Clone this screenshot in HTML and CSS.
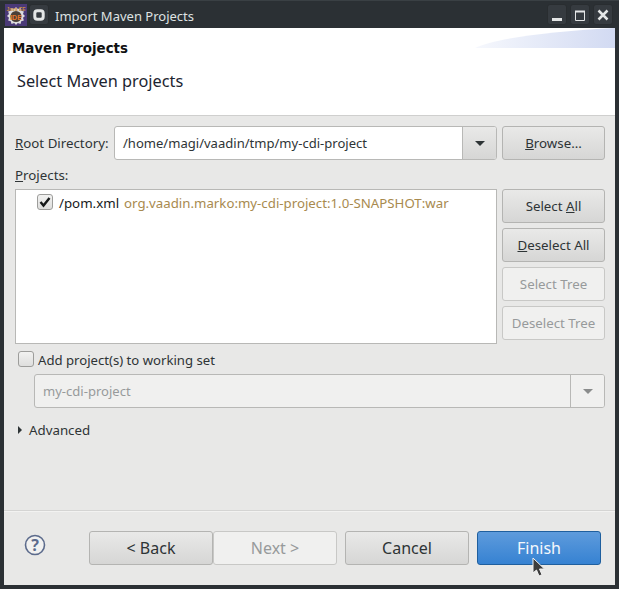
FILE: index.html

```html
<!DOCTYPE html>
<html lang="en">
<head>
  <meta charset="UTF-8" />
  <title>Import Maven Projects</title>
  <link rel="stylesheet" href="styles.css">
</head>
<body>
  <div class="window">
    <div class="titlebar">
      <svg class="app-icon" width="22" height="22" viewBox="0 0 22 22">
        <rect width="22" height="22" fill="#4b3a78"/>
        <path d="M11 3l1.800 2 2.700-1 .7 2.700 2.700.7-.9 2.700L20 12l-2 1.800.9 2.700-2.700.7-.7 2.700-2.700-.9L11 21l-1.800-2-2.700.9-.7-2.700-2.700-.7.9-2.700L2 12l2-1.900-.9-2.700 2.700-.7.7-2.700 2.700 1z" fill="#dcdcdc"/>
        <circle cx="11" cy="12.500" r="5.500" fill="#4a4038"/>
        <text x="11" y="6.500" text-anchor="middle" class="icon-top">Java EE</text>
        <text x="11" y="15.500" text-anchor="middle" class="icon-mid">IDE</text>
      </svg>
      <button class="win-btn menu-btn">
        <svg width="14" height="14" viewBox="0 0 14 14"><rect x="2.800" y="2.800" width="8.400" height="8.400" rx="2.500" fill="none" stroke="#e4e6e6" stroke-width="3"/></svg>
      </button>
      <span class="title">Import Maven Projects</span>
      <div class="win-controls">
        <button class="win-btn"><svg width="14" height="14" viewBox="0 0 14 14"><rect x="2" y="10" width="10" height="3" fill="#e4e6e6"/></svg></button>
        <button class="win-btn"><svg width="14" height="14" viewBox="0 0 14 14"><path d="M2.500 3.500h9v9h-9z" fill="none" stroke="#e4e6e6"/><rect x="2" y="2.500" width="10" height="2" fill="#e4e6e6"/></svg></button>
        <button class="win-btn"><svg width="14" height="14" viewBox="0 0 14 14"><path d="M2.500 2.500l9 9M11.500 2.500l-9 9" stroke="#e4e6e6" stroke-width="2.500" fill="none"/></svg></button>
      </div>
    </div>

    <div class="header">
      <svg class="swoosh" width="140" height="20" viewBox="0 0 140 20">
        <defs>
          <linearGradient id="sw" x1="0" x2="1" y1="0" y2="0">
            <stop offset="0" stop-color="#f6f8fd"/>
            <stop offset="1" stop-color="#d2daf2"/>
          </linearGradient>
        </defs>
        <path d="M0 20C20 10 80 3 140 0V20z" fill="url(#sw)"/>
      </svg>
      <div class="header-title">Maven Projects</div>
      <div class="header-sub">Select Maven projects</div>
    </div>

    <div class="content">
      <div class="root-row">
        <label class="root-label"><u>R</u>oot Directory:</label>
        <div class="combo">
          <div class="combo-value">/home/magi/vaadin/tmp/my-cdi-project</div>
          <div class="combo-arrow"><span class="caret"></span></div>
        </div>
        <button class="btn side-btn"><u>B</u>rowse...</button>
      </div>

      <div class="projects-label"><u>P</u>rojects:</div>
      <div class="projects-row">
        <div class="project-list">
          <div class="project-item">
            <span class="check checked">
              <svg width="14" height="14" viewBox="0 0 14 14"><path d="M2.500 7l3 3.500L11.500 3" fill="none" stroke="#16191a" stroke-width="2.400"/></svg>
            </span>
            <span class="pom">/pom.xml</span>
            <span class="artifact">org.vaadin.marko:my-cdi-project:1.0-SNAPSHOT:war</span>
          </div>
        </div>
        <div class="side-buttons">
          <button class="btn side-btn">Select <u>A</u>ll</button>
          <button class="btn side-btn"><u>D</u>eselect All</button>
          <button class="btn side-btn" disabled>Select Tree</button>
          <button class="btn side-btn" disabled>Deselect Tree</button>
        </div>
      </div>

      <div class="workset-row">
        <span class="check"></span>
        <span class="workset-label">Add project(s) to working set</span>
      </div>
      <div class="combo combo-disabled">
        <div class="combo-value">my-cdi-project</div>
        <div class="combo-arrow"><span class="caret"></span></div>
      </div>

      <div class="advanced">
        <span class="tri"></span>
        <span>Advanced</span>
      </div>
    </div>

    <div class="footer">
      <svg class="help" width="22" height="22" viewBox="0 0 22 22">
        <circle cx="11" cy="11" r="9.500" fill="#fff" fill-opacity="0.4" stroke="#5c6b8c" stroke-width="1.600"/>
        <text x="11" y="16.500" text-anchor="middle" class="help-mark">?</text>
      </svg>
      <div class="nav-buttons">
        <button class="btn foot-btn">&lt; Back</button>
        <button class="btn foot-btn" disabled>Next &gt;</button>
        <button class="btn foot-btn cancel">Cancel</button>
        <button class="btn foot-btn primary">Finish</button>
      </div>
    </div>

    <svg class="cursor" width="14" height="22" viewBox="0 0 14 22">
      <path d="M1 1v15l3.500-3 2.500 6 3-1.300-2.500-5.700H12.500z" fill="#3c3c3c" stroke="#f2f2f2" stroke-width="1"/>
    </svg>
  </div>
</body>
</html>
```

FILE: styles.css

```css
* {
  box-sizing: border-box;
}
html, body {
  margin: 0;
  padding: 0;
}
body {
  width: 619px;
  height: 589px;
  overflow: hidden;
  font-family: "Noto Sans", sans-serif;
  font-size: 13.300px;
  color: #2e3436;
}
.window {
  position: relative;
  width: 619px;
  height: 589px;
  padding: 0 4px 4px;
  background-color: #2b3034;
  display: flex;
  flex-direction: column;
  border-top: 1px solid #3a4044;
}
.titlebar {
  height: 27px;
  flex: none;
  margin: 0 -4px;
  padding: 0 6px 0 5px;
  display: flex;
  align-items: center;
  color: #dfe2e2;
  font-size: 13px;
}
.app-icon {
  margin-right: 2px;
}
.icon-top {
  font-family: "Liberation Sans", sans-serif;
  font-size: 5px;
  font-weight: bold;
  fill: #c9903e;
}
.icon-mid {
  font-family: "Liberation Sans", sans-serif;
  font-size: 7px;
  font-weight: bold;
  fill: #e8772a;
}
.title {
  margin: 2px 0 0 6px;
  flex: 1;
}
.win-controls {
  display: flex;
  gap: 3px;
}
.win-btn {
  width: 20px;
  height: 21px;
  padding: 0;
  border: 1px solid #292d30;
  border-radius: 3px;
  background-color: #363b40;
  display: flex;
  align-items: center;
  justify-content: center;
}
.header {
  position: relative;
  height: 88px;
  flex: none;
  background-color: #fff;
  border-bottom: 1px solid #cfcfce;
}
.swoosh {
  position: absolute;
  top: 0;
  right: 0;
}
.header-title {
  padding: 12px 0 0 8px;
  font-family: "DejaVu Sans", sans-serif;
  font-size: 13.400px;
  font-weight: bold;
  color: #111;
  line-height: 18px;
}
.header-sub {
  padding: 13px 0 0 13px;
  font-size: 16.300px;
  line-height: 20px;
  color: #1c2430;
}
.content {
  flex: 1;
  background-color: #e8e8e7;
  padding: 10px 10px 0 11px;
  border-bottom: 1px solid #d4d4d3;
}
.root-row {
  display: flex;
  align-items: center;
  height: 34px;
}
.root-label {
  width: 99px;
}
.combo {
  display: flex;
  width: 383px;
  height: 34px;
  background-color: #fff;
  border: 1px solid #b8b8b6;
  border-radius: 3px;
}
.combo-value {
  flex: 1;
  padding: 0 8px;
  font-size: 13.050px;
  line-height: 32px;
}
.combo-arrow {
  width: 34px;
  display: flex;
  align-items: center;
  justify-content: center;
  border-left: 1px solid #b8b8b6;
  background: linear-gradient(#e9e9e8, #d6d6d5);
  border-radius: 0 2px 2px 0;
}
.caret {
  width: 0;
  height: 0;
  border-left: 5px solid transparent;
  border-right: 5px solid transparent;
  border-top: 5px solid #2e3436;
}
.btn {
  font-family: inherit;
  font-size: 13.300px;
  color: #2e3436;
  padding: 0;
  border: 1px solid #b4b4b2;
  border-radius: 3px;
  background: linear-gradient(#e9e9e8, #d6d6d5);
}
.btn:disabled {
  color: #979a9b;
  background: #f0f0ef;
  border-color: #c8c8c6;
}
.side-btn {
  width: 103px;
  height: 34px;
}
.root-row .side-btn {
  margin-left: 5px;
}
.projects-label {
  margin-top: 6px;
  height: 23px;
  line-height: 18px;
}
.projects-row {
  display: flex;
  gap: 5px;
}
.project-list {
  width: 482px;
  height: 155px;
  background-color: #fff;
  border: 1px solid #b8b8b6;
  padding: 3px 0 0 21px;
}
.project-item {
  display: flex;
  align-items: center;
  height: 20px;
}
.project-item .check {
  margin-bottom: 2px;
}
.check {
  width: 16px;
  height: 16px;
  flex: none;
  border: 1px solid #9d9d9b;
  border-radius: 3px;
  background: linear-gradient(#f2f2f1, #dededd);
  display: flex;
  align-items: center;
  justify-content: center;
}
.pom {
  margin-left: 6px;
  color: #16191a;
}
.artifact {
  margin-left: 5px;
  font-size: 13.250px;
  color: #a88a4e;
}
.side-buttons {
  display: flex;
  flex-direction: column;
  gap: 5px;
}
.workset-row {
  display: flex;
  align-items: center;
  gap: 4px;
  height: 18px;
  margin: 6px 0 0 3px;
}
.workset-label {
  margin-top: 2px;
  font-size: 13.150px;
}
.combo-disabled {
  width: 571px;
  margin: 6px 0 0 19px;
  background-color: #f0f0ef;
  color: #979a9b;
}
.combo-disabled .combo-arrow {
  background: #f0f0ef;
}
.combo-disabled .caret {
  border-top-color: #8a8c8c;
}
.advanced {
  display: flex;
  align-items: center;
  gap: 7px;
  height: 18px;
  margin: 13px 0 0 3px;
}
.tri {
  width: 0;
  height: 0;
  border-top: 4px solid transparent;
  border-bottom: 4px solid transparent;
  border-left: 4px solid #2e3436;
}
.footer {
  height: 74px;
  flex: none;
  background-color: #e8e8e7;
  border-top: 1px solid #f2f2f1;
  padding: 19px 14px 0 20px;
  display: flex;
  align-items: flex-start;
}
.help {
  margin-top: 3px;
}
.help-mark {
  font-family: "Noto Sans", sans-serif;
  font-size: 16px;
  font-weight: bold;
  fill: #5c6b8c;
}
.nav-buttons {
  display: flex;
  margin-left: auto;
}
.foot-btn {
  width: 124px;
  height: 34px;
  font-size: 16px;
}
.cancel {
  margin-left: 8px;
}
.primary {
  margin-left: 8px;
  color: #f4f8fc;
  border-color: #1f5f9e;
  background: linear-gradient(#5e9bdc, #3682d2);
}
.cursor {
  position: absolute;
  left: 532px;
  top: 556px;
}
```
